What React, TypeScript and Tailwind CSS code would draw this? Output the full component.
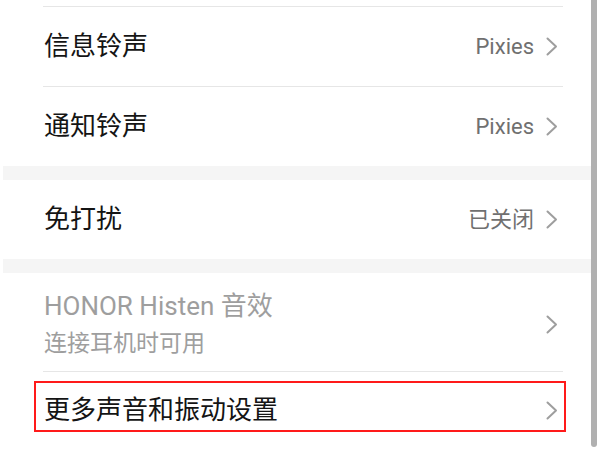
import { ReactNode } from 'react';

const font = { fontFamily: 'Roboto, "Noto Sans CJK SC", sans-serif' };

function Chevron() {
  return (
    <svg width="12" height="19" viewBox="0 0 12 19" fill="none" className="shrink-0">
      <polyline points="1.5,1.5 10,9.5 1.5,17.5" stroke="#9e9e9e" strokeWidth="2" strokeLinecap="round" strokeLinejoin="round" />
    </svg>
  );
}

function Divider() {
  return <div className="ml-[40px] mr-[28px] h-px bg-[#e6e6e6]" />;
}

function Gap() {
  return <div className="h-[14px] bg-[#f5f5f5]" />;
}

function Row({ title, value }: { title: string; value?: string }) {
  return (
    <div className="flex h-[79px] items-center pl-[41px] pr-[33px]">
      <span className="flex-1 text-[26px] text-[#141414]">{title}</span>
      {value && <span className="mr-[12px] text-[22px] text-[#707070]">{value}</span>}
      <Chevron />
    </div>
  );
}

function Highlight({ children }: { children: ReactNode }) {
  return (
    <div className="ml-[31px] mr-[25px] mt-[9px] flex h-[51px] items-center border-2 border-[#ff1a1a] pl-[8px] pr-[6px] pt-[8px]">
      {children}
    </div>
  );
}

export default function App() {
  return (
    <div className="flex h-[450px] w-[600px] overflow-hidden bg-white" style={font}>
      <div className="ml-[3px] flex-1">
        <div className="h-[6px]" />
        <Divider />
        <Row title="信息铃声" value="Pixies" />
        <Divider />
        <Row title="通知铃声" value="Pixies" />
        <Gap />
        <Row title="免打扰" value="已关闭" />
        <Gap />
        <div className="flex h-[98px] items-center pl-[41px] pr-[33px] pt-[5px]">
          <div className="flex flex-1 flex-col">
            <span className="text-[26px] leading-[32px] text-[#9e9e9e]">HONOR Histen 音效</span>
            <span className="mt-[7px] text-[23px] leading-[30px] text-[#9e9e9e]">连接耳机时可用</span>
          </div>
          <Chevron />
        </div>
        <Divider />
        <Highlight>
          <span className="flex-1 text-[26px] text-[#141414]">更多声音和振动设置</span>
          <Chevron />
        </Highlight>
      </div>
      <div className="mr-[3px] h-[447px] w-[6px] rounded-b-full bg-[#b0b0b0]" />
    </div>
  );
}
